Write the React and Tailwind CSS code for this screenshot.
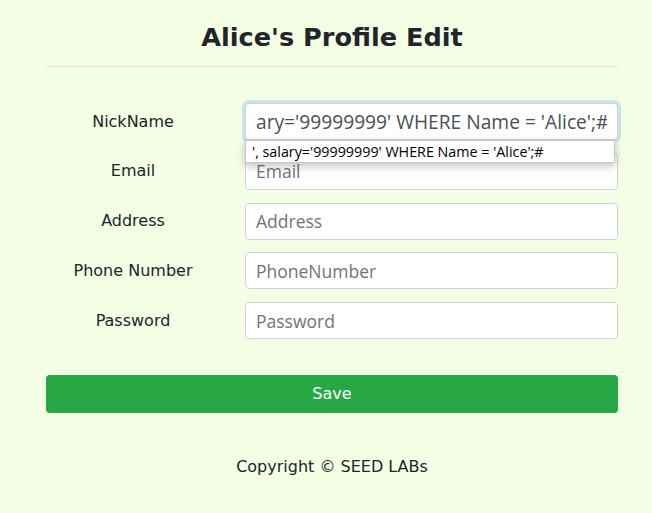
const fields = [
  { label: "NickName", placeholder: "NickName" },
  { label: "Email", placeholder: "Email" },
  { label: "Address", placeholder: "Address" },
  { label: "Phone Number", placeholder: "PhoneNumber" },
  { label: "Password", placeholder: "Password" },
];

const inputCls =
  "box-border block w-full h-[37px] rounded-[4px] border border-[#ced4da] bg-white px-[10px] text-[17.5px] text-[#495057] placeholder:text-[#6c757d] outline-none font-['Open_Sans',sans-serif]";

const App = () => {
  return (
    <div className="min-h-[513px] bg-[#f3fee5] font-['DejaVu_Sans',sans-serif] text-[#212529]">
      <div className="ml-[46px] w-[572px] pt-[20px]">
        <h2 className="text-center text-[25.6px] font-bold leading-[34px]">Alice's Profile Edit</h2>
        <hr className="mt-[12px] border-t border-[#dfe3d6]" />

        <form className="mt-[36px]" onSubmit={(e) => e.preventDefault()}>
          {fields.map((f, i) => (
            <div key={f.label} className="mb-[12.75px] flex items-center">
              <label className="w-[174px] shrink-0 text-center text-[16px]">{f.label}</label>
              <div className="relative ml-[25px] flex-1">
                {i === 0 ? (
                  <>
                    <input
                      className={inputCls + " !text-[19.2px] border-[#80bdff] shadow-[0_0_0_3px_rgba(0,123,255,0.18)]"}
                      defaultValue="ary='99999999' WHERE Name = 'Alice';#"
                    />
                    <div className="absolute left-0 top-[37px] z-10 h-[23px] w-[370px] border border-[#c8c8c8] bg-white px-[6px] text-[14.3px] leading-[21px] text-black shadow-[0_3px_8px_rgba(0,0,0,0.25)] font-['Open_Sans',sans-serif]">
                      ', salary='99999999' WHERE Name = 'Alice';#
                    </div>
                  </>
                ) : (
                  <input
                    className={inputCls}
                    placeholder={f.placeholder}
                    type={f.label === "Password" ? "password" : "text"}
                  />
                )}
              </div>
            </div>
          ))}

          <button
            type="submit"
            className="mt-[23.25px] h-[38px] w-full rounded-[4px] bg-[#28a745] text-[16px] text-white"
          >
            Save
          </button>
        </form>

        <div className="mt-[42px] text-center text-[16px]">Copyright © SEED LABs</div>
      </div>
    </div>
  );
};

export default App;
